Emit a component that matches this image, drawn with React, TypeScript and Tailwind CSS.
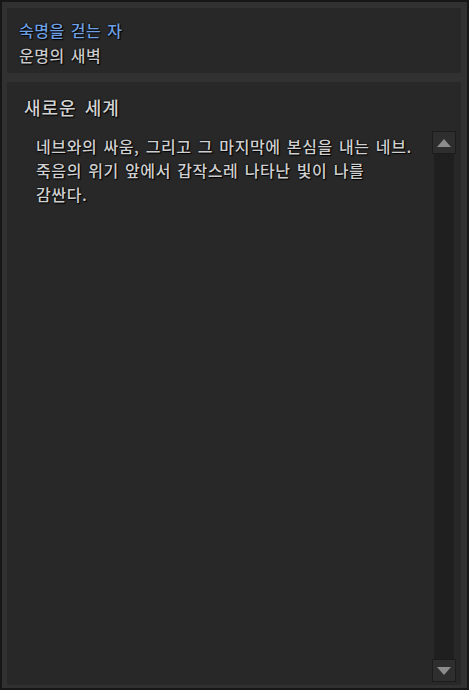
const shadow = "[text-shadow:0_0_2px_#000,1px_1px_1px_#000]";

const Arrow = ({ up }: { up?: boolean }) => (
  <div className="w-[24px] h-[23px] bg-[#2e2e2e] border border-[#1c1c1c] flex items-center justify-center">
    <svg width="16" height="10" viewBox="0 0 16 10">
      {up ? (
        <polygon points="8,1 15,9 1,9" fill="#8c8c8c" />
      ) : (
        <polygon points="1,1 15,1 8,9" fill="#8c8c8c" />
      )}
    </svg>
  </div>
);

export default function App() {
  return (
    <main
      className="w-[469px] h-[690px] bg-[#313131] border-2 border-[#161616] pl-[5px] pr-[6px] pt-[6px] pb-[3px] flex flex-col gap-[9px] font-['Noto_Sans_CJK_KR','Noto_Sans',sans-serif] font-medium"
    >
      <section className={`h-[65px] bg-[#282828] pl-[12px] pt-[10px] text-[16px] leading-[25px] tracking-[0.5px] [word-spacing:2px] ${shadow}`}>
        <p className="text-[#6fa0e4]">숙명을 걷는 자</p>
        <p className="text-[#c9c9c9]">운명의 새벽</p>
      </section>
      <section className="flex-1 bg-[#282828] flex flex-col">
        <h1 className={`pl-[17px] pt-[12px] text-[18px] leading-[26px] tracking-[1px] [word-spacing:3px] text-[#d2d2d2] ${shadow}`}>새로운 세계</h1>
        <div className="flex-1 flex pt-[11px] pb-[3px] pr-[5px]">
          <p className={`flex-1 pl-[29px] pt-[3px] text-[16px] leading-[24px] tracking-[0.6px] [word-spacing:2px] text-[#cfcfcf] ${shadow}`}>
            네브와의 싸움, 그리고 그 마지막에 본심을 내는 네브.
            <br />
            죽음의 위기 앞에서 갑작스레 나타난 빛이 나를
            <br />
            감싼다.
          </p>
          <div className="w-[24px] flex flex-col">
            <Arrow up />
            <div className="flex-1 mx-[2px] bg-[#1f1f1f]" />
            <Arrow />
          </div>
        </div>
      </section>
    </main>
  );
}
